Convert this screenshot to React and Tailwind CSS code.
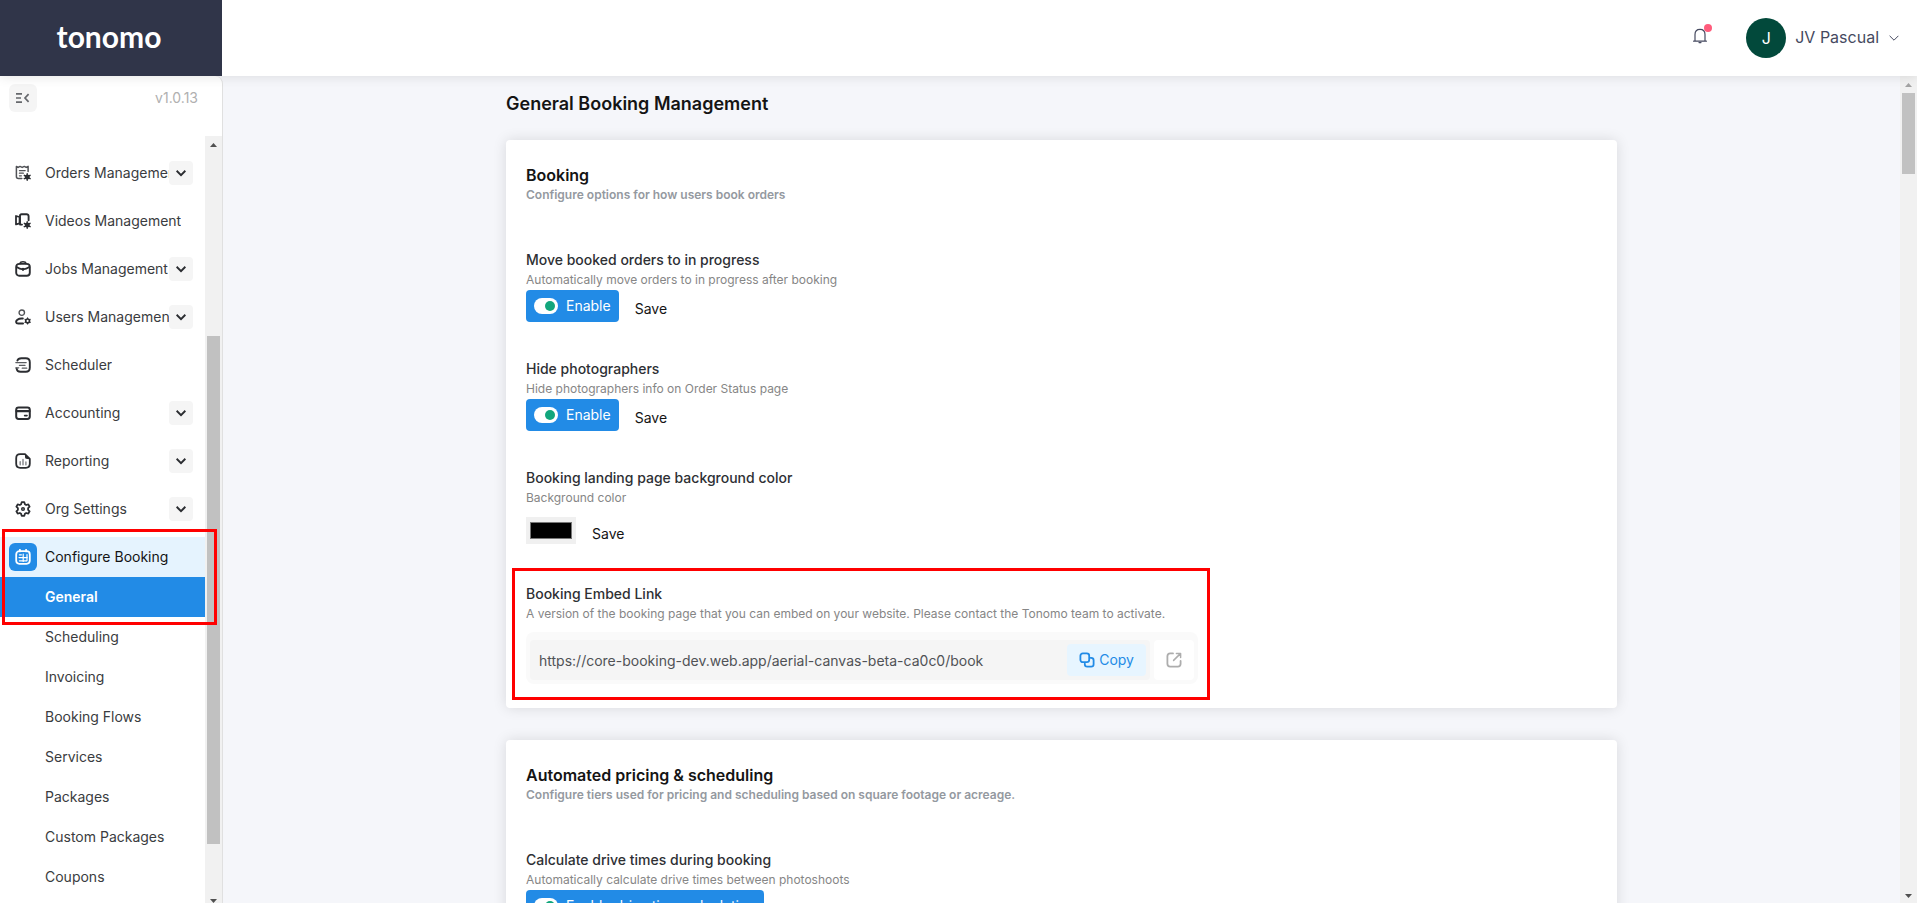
import React from "react";

function Svg({ children, size = 16, className = "text-[#2b2d31]" }) {
  return (
    <svg
      width={size}
      height={size}
      viewBox="0 0 16 16"
      fill="none"
      stroke="currentColor"
      strokeWidth="1.6"
      strokeLinecap="round"
      strokeLinejoin="round"
      className={className}
      aria-hidden="true"
    >
      {children}
    </svg>
  );
}

const gearDot = (
  <g>
    <circle cx="12.2" cy="12" r="2.5" fill="currentColor" stroke="none" />
    <path d="M12.2 8.700v6.600M9.300 10.300l5.800 3.400M9.300 13.700l5.800-3.400" strokeWidth="1.400" />
  </g>
);

const icons = {
  orders: (
    <Svg>
      <g strokeWidth="1.5" stroke="#505256">
        <path d="M6.8 13.6H3.4a2 2 0 0 1-2-2V1.400l1.8 1L5 1.400l2.200 1L9.300 1.400l1.900 1 1.900-1v5.200" />
        <path d="M4.400 5.600h5.800M4.400 8.200h4M4.400 10.800h2" strokeWidth="1.200" />
      </g>
      {gearDot}
    </Svg>
  ),
  videos: (
    <Svg>
      <path d="M1 3l3.600 1v6.400L1 11.400z" strokeWidth="1.8" />
      <path d="M5 11.6V2.800a1.600 1.600 0 0 1 1.600-1.600h5a2 2 0 0 1 2 2v4M5 11.6h2" strokeWidth="1.900" />
      {gearDot}
    </Svg>
  ),
  jobs: (
    <Svg>
      <rect x="1.2" y="2.9" width="13.6" height="11.9" rx="3" strokeWidth="1.9" />
      <path d="M5 2.6c.4-1.6 1-1.8 3-1.8s2.6.2 3 1.8" strokeWidth="1.6" />
      <path d="M1.6 6c2 1.5 4.200 2.300 6.400 2.300s4.400-.8 6.400-2.300M8 7.600v1.600" strokeWidth="1.7" />
    </Svg>
  ),
  users: (
    <Svg>
      <circle cx="6.8" cy="3.7" r="2.7" strokeWidth="1.4" stroke="#505256" />
      <path d="M8 14.6H3.200c-2.600 0-2.600-2.600-.8-3.900 1.400-1 3.400-1.400 5.400-1.200" strokeWidth="2" />
      <circle cx="12.6" cy="11.900" r="1.900" strokeWidth="1.700" />
      <path d="M12.600 8.900v.6M12.600 14.300v.6M10 10.400l.5.3M14.700 13.100l.5.3M10 13.400l.5-.3M14.700 10.700l.5-.3" strokeWidth="1.100" />
    </Svg>
  ),
  scheduler: (
    <Svg>
      <path d="M2.400 3.600C3 1.600 4.200 1.200 6.400 1.200h4.400c2.800 0 4 1.200 4 4v5.600c0 2.800-1.200 4-4 4H5.600c-2.600 0-3.800-1-4-3.400" strokeWidth="1.9" />
      <path d="M.8 5.600h10.400M4.400 8.400H10M.8 10.800h3M7.200 11.200h4.600" strokeWidth="1.2" stroke="#5a5c60" />
    </Svg>
  ),
  accounting: (
    <Svg>
      <rect x="1.2" y="2.4" width="13.6" height="11.6" rx="2.4" strokeWidth="2" />
      <path d="M1.600 6.200h12.800" strokeWidth="2.200" />
      <path d="M9.600 10.600h2.400" strokeWidth="1.600" />
    </Svg>
  ),
  reporting: (
    <Svg>
      <path d="M10 1.200H5.200c-2.800 0-4 1.200-4 4v5.600c0 2.800 1.200 4 4 4h5.600c2.800 0 4-1.200 4-4V6z" strokeWidth="1.8" />
      <path d="M10 1l5 5h-2.600C10.600 6 10 5.400 10 3.600z" fill="currentColor" stroke="none" />
      <path d="M5.200 8.800v3M8 6.600v5.200M10.900 9v2.800" strokeWidth="1.500" stroke="#8a8c90" />
    </Svg>
  ),
  settings: (
    <Svg>
      <path
        d="M6.700 1.200h2.600l.6 2 1.300.8 2.100-.6 1.300 2.300-1.500 1.500v1.600l1.500 1.500-1.300 2.300-2.100-.6-1.300.8-.6 2H6.700l-.6-2-1.300-.8-2.100.6-1.300-2.300 1.500-1.500V7.200L1.400 5.700l1.300-2.300 2.100.6 1.300-.8z"
        strokeWidth="1.8"
      />
      <circle cx="8" cy="8" r="1.300" strokeWidth="1.500" />
    </Svg>
  ),
  booking: (
    <Svg className="text-white">
      <rect x="1.2" y="2.2" width="13.6" height="12.6" rx="3.2" strokeWidth="1.8" />
      <path d="M4.9.8v1.600M11.100.8v1.600" strokeWidth="1.800" />
      <path d="M4 8.600h8.400M8.200 5v7.400M4.400 5.800h2M4.400 11.800h7.400M12 5.600v6" strokeWidth="1.200" />
    </Svg>
  ),
};

function ChevronDown({ size = 10, width = 2 }) {
  return (
    <svg width={size} height={size} viewBox="0 0 10 10" fill="none" stroke="currentColor" strokeWidth={width} aria-hidden="true">
      <path d="M.6 2.800L5 7.200l4.400-4.400" />
    </svg>
  );
}

const navItems = [
  { label: "Orders Management", icon: "orders", expandable: true },
  { label: "Videos Management", icon: "videos" },
  { label: "Jobs Management", icon: "jobs", expandable: true },
  { label: "Users Management", icon: "users", expandable: true },
  { label: "Scheduler", icon: "scheduler" },
  { label: "Accounting", icon: "accounting", expandable: true },
  { label: "Reporting", icon: "reporting", expandable: true },
  { label: "Org Settings", icon: "settings", expandable: true },
];

const subItems = ["Scheduling", "Invoicing", "Booking Flows", "Services", "Packages", "Custom Packages", "Coupons"];

function NavItem({ label, icon, expandable }) {
  return (
    <li className="flex h-10 items-center pr-3">
      <a href="#" className="flex min-w-0 flex-1 items-center pl-[15px]">
        <span className="flex w-[30px] shrink-0">{icons[icon]}</span>
        <span className="overflow-hidden whitespace-nowrap">{label}</span>
      </a>
      {expandable && (
        <button type="button" aria-label={"Expand " + label} className="flex size-6 shrink-0 items-center justify-center rounded bg-[#f5f5f5] text-[#2b2d31]">
          <ChevronDown />
        </button>
      )}
    </li>
  );
}

function Arrow({ up, className }) {
  return (
    <svg width="7" height="4" viewBox="0 0 7 4" className={className} fill="currentColor" aria-hidden="true">
      <path d={up ? "M0 4L3.5 0 7 4z" : "M0 0l3.5 4L7 0z"} />
    </svg>
  );
}

function Sidebar() {
  return (
    <aside className="flex w-[223px] shrink-0 flex-col overflow-hidden rounded-tr-lg border-r border-[#e0e0e0] bg-white text-sm text-[#3a3c40]">
      <div className="flex h-[60px] shrink-0 items-start justify-between pt-2 pr-6 pl-[9px]">
        <button type="button" aria-label="Collapse menu" className="flex size-7 items-center justify-center rounded-md bg-[#f5f5f5] text-[#66686c]">
          <svg width="14" height="12" viewBox="0 0 14 12" fill="none" stroke="currentColor" strokeWidth="1.7" aria-hidden="true">
            <path d="M0 1.800h6M0 6h5M0 10.200h6M12.600 2.200L9 6l3.600 3.800" />
          </svg>
        </button>
        <span className="leading-7 text-[#b0b0b0]">v1.0.13</span>
      </div>
      <div className="flex min-h-0 flex-1">
        <nav className="min-w-0 flex-1 pt-[17px]">
          <ul className="flex flex-col gap-2">
            {navItems.map((item) => (
              <NavItem key={item.label} {...item} />
            ))}
            <li className="relative">
              <a href="#" className="flex h-10 items-center bg-[#e5f3fe] pl-[9px] text-[#141414]">
                <span className="mr-2 flex size-7 items-center justify-center rounded-md bg-[#228be6]">{icons.booking}</span>
                Configure Booking
              </a>
              <a href="#" className="flex h-10 items-center bg-[#228be6] pl-[45px] font-semibold text-white">
                General
              </a>
              <div className="pointer-events-none absolute -inset-y-2 -right-3 left-0.5 z-10 border-3 border-[#ff0000]" />
            </li>
          </ul>
          <ul>
            {subItems.map((label) => (
              <li key={label}>
                <a href="#" className="flex h-10 items-center pl-[45px]">
                  {label}
                </a>
              </li>
            ))}
          </ul>
        </nav>
        <div className="flex w-[17px] shrink-0 flex-col items-center bg-[#f1f1f1] text-[#505050]">
          <Arrow up className="mt-[7px] shrink-0" />
          <div className="flex w-full flex-1 flex-col items-center">
            <div className="flex-[189]" />
            <div className="w-[13px] flex-[509] bg-[#c1c1c1]" />
            <div className="flex-[55]" />
          </div>
          <Arrow className="shrink-0" />
        </div>
      </div>
    </aside>
  );
}

function Header() {
  return (
    <header className="relative z-20 flex h-[76px] shrink-0 bg-white shadow-[0_0_12px_rgba(0,0,0,0.12)]">
      <a href="#" className="flex w-[222px] items-center justify-center bg-[#303549] pr-1 pb-1 font-[Lato,sans-serif] text-[30px] font-bold text-white">
        tonomo
      </a>
      <div className="flex flex-1 items-center justify-end pr-[18px] text-[#464a60]">
        <button type="button" aria-label="Notifications" className="relative mr-[38px] mb-1 flex">
          <svg width="16" height="16" viewBox="0 0 16 16" fill="none" stroke="currentColor" strokeWidth="1.2" strokeLinecap="round" strokeLinejoin="round" aria-hidden="true">
            <path d="M1.600 13.200h12.800M3 13V6.600C3 3.400 5 1.400 8 1.400s5 2 5 5.200V13M7 14.600h2" />
          </svg>
          <span className="absolute -top-1 -right-1 size-2 rounded-full bg-[#ff5c7c]" />
        </button>
        <button type="button" className="flex items-center text-base">
          <span className="mr-[9px] flex size-10 items-center justify-center rounded-full bg-[#02493b] text-white">J</span>
          <span className="pb-0.5">JV Pascual</span>
          <span className="ml-[10px]">
            <ChevronDown width={1} />
          </span>
        </button>
      </div>
    </header>
  );
}

function Card({ title, subtitle, children }) {
  return (
    <section className="mb-8 rounded bg-white px-5 pt-[23px] pb-6 shadow-[0_0_14px_rgba(0,0,0,0.12)]">
      <h2 className="text-base leading-6 font-semibold text-[#141414]">{title}</h2>
      <p className="text-xs leading-4 font-semibold text-[#94999f]">{subtitle}</p>
      <div className="mt-[47px] flex flex-col gap-[37px]">{children}</div>
    </section>
  );
}

function Setting({ title, hint, children }) {
  return (
    <div>
      <h3 className="text-sm leading-5 font-medium text-[#2e3034]">{title}</h3>
      <p className="text-xs leading-5 text-[#868686]">{hint}</p>
      {children}
    </div>
  );
}

function Toggle({ label = "Enable" }) {
  return (
    <label className="relative flex h-8 items-center gap-2 rounded bg-[#228be6] px-2 text-sm text-white">
      <input type="checkbox" defaultChecked className="peer sr-only" />
      <span className="flex h-4 w-6 items-center justify-start rounded-full bg-white px-[3px] peer-checked:justify-end">
        <span className="size-[10px] rounded-full bg-[#12a67c]" />
      </span>
      {label}
    </label>
  );
}

function ToggleRow({ label }) {
  return (
    <div className="flex h-8 items-center gap-4">
      <Toggle label={label} />
      <SaveButton />
    </div>
  );
}

function SaveButton() {
  return (
    <button type="button" className="pt-1.5 text-sm text-[#141414]">
      Save
    </button>
  );
}

function EmbedLink() {
  return (
    <div className="mt-2 flex max-w-[672px] gap-1 rounded-lg bg-[#fafafa] px-1 pt-2 pb-1">
      <div className="flex h-10 min-w-0 flex-1 items-center rounded bg-[#f5f5f5] pr-1 pl-[9px]">
        <input
          type="text"
          readOnly
          aria-label="Booking embed link"
          value="https://core-booking-dev.web.app/aerial-canvas-beta-ca0c0/book"
          className="min-w-0 flex-1 bg-transparent pt-0.5 text-sm text-[#505256] outline-none"
        />
        <button type="button" className="flex h-8 items-center gap-1 rounded bg-[#e7f5ff] px-3 text-sm text-[#228be6]">
          <Svg className="text-[#228be6]">
            <rect x="1.4" y="1.4" width="8.8" height="8.8" rx="2.4" strokeWidth="1.8" />
            <path d="M11.600 5.800h.6c1.600 0 2.400.8 2.400 2.400v4c0 1.600-.8 2.400-2.400 2.400h-4c-1.600 0-2.400-.8-2.400-2.400v-.6" strokeWidth="1.8" />
          </Svg>
          Copy
        </button>
      </div>
      <a href="#" aria-label="Open link" className="flex size-10 items-center justify-center rounded bg-white">
        <Svg className="text-[#adadad]">
          <path d="M7 1.400H4.200c-1.900 0-2.800.9-2.800 2.800v7.600c0 1.900.9 2.800 2.800 2.800h7.600c1.900 0 2.800-.9 2.800-2.800V9" strokeWidth="1.8" />
          <path d="M10.400 1.400h4.200v4.200M14.400 1.600L7.600 8.400" strokeWidth="1.5" />
        </Svg>
      </a>
    </div>
  );
}

export default function App() {
  return (
    <div className="flex h-screen flex-col overflow-hidden bg-[#f5f6fa] font-[Inter,sans-serif]">
      <Header />
      <div className="flex min-h-0 flex-1">
        <Sidebar />
        <main className="min-w-0 flex-1 overflow-hidden pt-4">
          <div className="mx-auto max-w-[1111px]">
            <h1 className="mb-6 text-lg leading-6 font-semibold text-[#141414]">General Booking Management</h1>
            <Card title="Booking" subtitle="Configure options for how users book orders">
              <Setting title="Move booked orders to in progress" hint="Automatically move orders to in progress after booking">
                <ToggleRow />
              </Setting>
              <Setting title="Hide photographers" hint="Hide photographers info on Order Status page">
                <ToggleRow />
              </Setting>
              <Setting title="Booking landing page background color" hint="Background color">
                <div className="mt-2 mb-0.5 flex h-[29px] items-center gap-4">
                  <input
                    type="color"
                    defaultValue="#000000"
                    aria-label="Background color"
                    className="h-[27px] w-[50px] bg-[#f0f0f0] px-0.5 py-px"
                  />
                  <SaveButton />
                </div>
              </Setting>
              <div className="relative">
                <Setting
                  title="Booking Embed Link"
                  hint="A version of the booking page that you can embed on your website. Please contact the Tonomo team to activate."
                >
                  <EmbedLink />
                </Setting>
                <div className="pointer-events-none absolute -inset-y-4 -left-[14px] w-[698px] border-3 border-[#ff0000]" />
              </div>
            </Card>
            <Card
              title="Automated pricing & scheduling"
              subtitle="Configure tiers used for pricing and scheduling based on square footage or acreage."
            >
              <Setting title="Calculate drive times during booking" hint="Automatically calculate drive times between photoshoots">
                <div className="flex">
                  <Toggle label="Enable drive time calculation" />
                </div>
              </Setting>
            </Card>
          </div>
        </main>
        <div className="flex w-[17px] shrink-0 flex-col items-center bg-[#f1f1f1] text-[#a3a3a3]">
          <Arrow up className="mt-[7px] mb-[6px] shrink-0" />
          <div className="w-[13px] flex-[80] bg-[#c1c1c1]" />
          <div className="flex-[714]" />
          <Arrow className="mb-[5px] shrink-0 text-[#505050]" />
        </div>
      </div>
    </div>
  );
}
